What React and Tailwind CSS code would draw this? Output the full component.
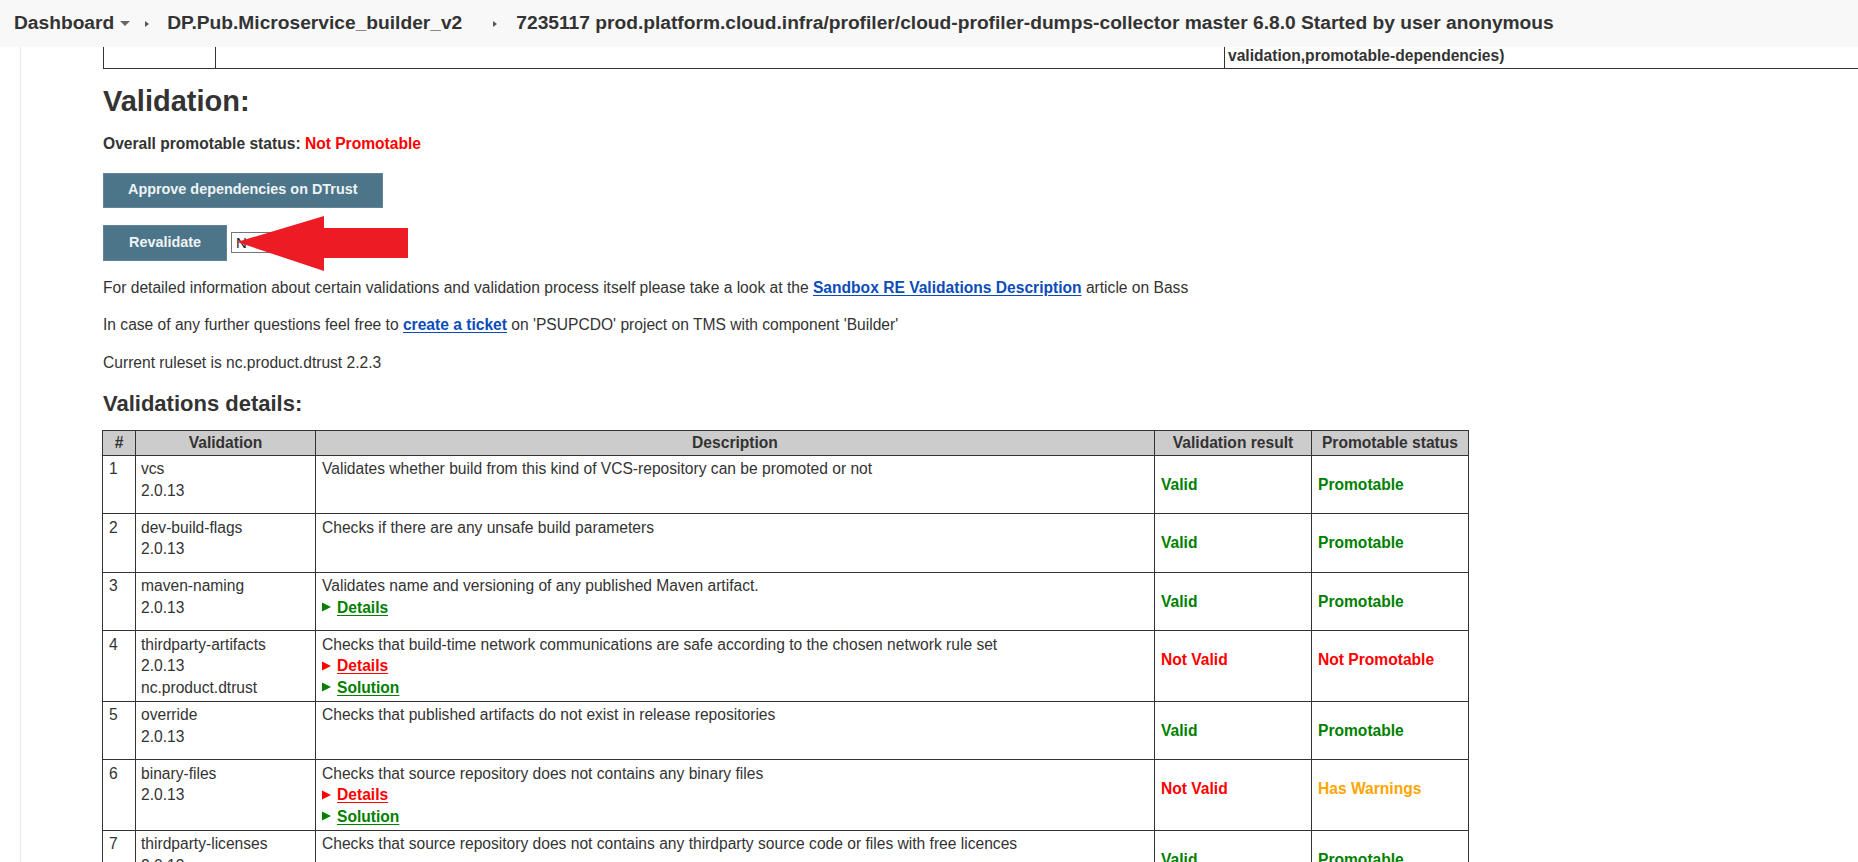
import React from "react";

const rows = [
  {
    n: 1,
    name: ["vcs", "2.0.13"],
    desc: "Validates whether build from this kind of VCS-repository can be promoted or not",
    links: [],
    result: "valid",
    status: "promotable",
  },
  {
    n: 2,
    name: ["dev-build-flags", "2.0.13"],
    desc: "Checks if there are any unsafe build parameters",
    links: [],
    result: "valid",
    status: "promotable",
  },
  {
    n: 3,
    name: ["maven-naming", "2.0.13"],
    desc: "Validates name and versioning of any published Maven artifact.",
    links: [["Details", "green"]],
    result: "valid",
    status: "promotable",
  },
  {
    n: 4,
    name: ["thirdparty-artifacts", "2.0.13", "nc.product.dtrust"],
    desc: "Checks that build-time network communications are safe according to the chosen network rule set",
    links: [
      ["Details", "red"],
      ["Solution", "green"],
    ],
    result: "invalid",
    status: "not",
  },
  {
    n: 5,
    name: ["override", "2.0.13"],
    desc: "Checks that published artifacts do not exist in release repositories",
    links: [],
    result: "valid",
    status: "promotable",
  },
  {
    n: 6,
    name: ["binary-files", "2.0.13"],
    desc: "Checks that source repository does not contains any binary files",
    links: [
      ["Details", "red"],
      ["Solution", "green"],
    ],
    result: "invalid",
    status: "warn",
  },
  {
    n: 7,
    name: ["thirdparty-licenses", "2.0.13"],
    desc: "Checks that source repository does not contains any thirdparty source code or files with free licences",
    links: [],
    result: "valid",
    status: "promotable",
  },
  {
    n: 8,
    name: ["promotable-dependencies", "2.0.13"],
    desc: "Checks that all dependencies of the build are promotable",
    links: [],
    result: "valid",
    status: "promotable",
  },
];

function Disclosure({ label, color }) {
  const red = color === "red";
  return (
    <div className="flex items-center h-[21.5px]">
      <svg width="9" height="10" viewBox="0 0 9 10" className="shrink-0">
        <polygon points="0,0.5 9,5 0,9.5" fill={red ? "#ff0000" : "#008000"} />
      </svg>
      <span
        className={
          "ml-[6px] font-bold underline underline-offset-[2px] " +
          (red ? "text-[#ff0000]" : "text-[#008000]")
        }
      >
        {label}
      </span>
    </div>
  );
}

function Result({ kind }) {
  if (kind === "valid") return <span className="font-bold text-[#008000]">Valid</span>;
  return <span className="font-bold text-[#ff0000]">Not Valid</span>;
}

function Status({ kind }) {
  if (kind === "promotable") return <span className="font-bold text-[#008000]">Promotable</span>;
  if (kind === "warn") return <span className="font-bold text-[#ffa500]">Has Warnings</span>;
  return <span className="font-bold text-[#ff0000]">Not Promotable</span>;
}

function Crumb() {
  return (
    <svg width="6" height="8" viewBox="0 0 6 8" className="shrink-0">
      <polygon points="1,1 5,4 1,7" fill="#555" />
    </svg>
  );
}

export default function App() {
  return (
    <div className="min-h-screen bg-white text-[#333] font-['Liberation_Sans',Arial,sans-serif]">
      <header className="relative z-10 h-[47px] bg-[#f8f8f8] flex items-center pl-[14px] text-[19.2px] font-bold text-[#333] whitespace-nowrap">
        <span>Dashboard</span>
        <svg width="10" height="6" viewBox="0 0 10 6" className="ml-[6px] mt-[1px]">
          <polygon points="0,0 10,0 5,5" fill="#666" />
        </svg>
        <span className="ml-[14px]">
          <Crumb />
        </span>
        <span className="ml-[17px]">DP.Pub.Microservice_builder_v2</span>
        <span className="ml-[30px]">
          <Crumb />
        </span>
        <span className="ml-[18px]">
          7235117 prod.platform.cloud.infra/profiler/cloud-profiler-dumps-collector master 6.8.0 Started by user
          anonymous
        </span>
      </header>

      <div className="flex">
        <div className="w-[21px] shrink-0 border-r border-[#e8e8e8] min-h-[900px]" />
        <main className="flex-1 min-w-0 pl-[82px] text-[15.6px] leading-[21.5px]">
          {/* tail of previous table */}
          <div className="-mt-[4px] flex h-[26px] border-b border-[#333]">
            <div className="w-[112px] border-l border-[#333]" />
            <div className="w-[1009px] border-l border-[#333]" />
            <div className="flex-1 border-l border-[#333] pl-[3px] pt-[2px] font-bold whitespace-nowrap">
              validation,promotable-dependencies)
            </div>
          </div>

          <h1 className="mt-[15px] text-[29px] leading-[35px] font-bold">Validation:</h1>

          <p className="mt-[14px] font-bold">
            Overall promotable status: <span className="text-[#ff0000]">Not Promotable</span>
          </p>

          <button className="mt-[18px] block h-[35px] px-[24px] bg-[#4d7589] border border-[#5f8598] text-[#eef3f5] text-[14.4px] font-bold">
            Approve dependencies on DTrust
          </button>

          <div className="relative mt-[17px] flex items-center">
            <button className="h-[36px] px-[25px] bg-[#4d7589] border border-[#5f8598] text-[#eef3f5] text-[14.4px] font-bold">
              Revalidate
            </button>
            <input
              readOnly
              value="N"
              className="ml-[4px] h-[21px] w-[160px] border border-[#767676] px-[4px] text-[15px] text-[#222] outline-none"
            />
            <svg
              width="171"
              height="55"
              viewBox="0 0 171 55"
              className="absolute left-[134px] top-[-9px] z-10"
            >
              <polygon points="0,26 87,0 87,12 171,12 171,42 87,42 87,55" fill="#ed1c24" />
            </svg>
          </div>

          <p className="mt-[16px]">
            For detailed information about certain validations and validation process itself please take a look at the{" "}
            <a className="font-bold text-[#0b4cba] underline underline-offset-[2px]">Sandbox RE Validations Description</a>{" "}
            article on Bass
          </p>
          <p className="mt-[16px]">
            In case of any further questions feel free to{" "}
            <a className="font-bold text-[#0b4cba] underline underline-offset-[2px]">create a ticket</a> on 'PSUPCDO'
            project on TMS with component 'Builder'
          </p>
          <p className="mt-[16px]">Current ruleset is nc.product.dtrust 2.2.3</p>

          <h2 className="mt-[18px] text-[22px] leading-[26px] font-bold">Validations details:</h2>

          <table className="mt-[13px] -ml-px border-collapse table-fixed w-[1366px]">
            <colgroup>
              <col className="w-[33px]" />
              <col className="w-[180px]" />
              <col className="w-[839px]" />
              <col className="w-[157px]" />
              <col className="w-[157px]" />
            </colgroup>
            <thead>
              <tr className="bg-[#cccccc]">
                <th className="border border-[#333] py-[1px] px-[6px] font-bold text-center">#</th>
                <th className="border border-[#333] py-[1px] px-[6px] font-bold text-center">Validation</th>
                <th className="border border-[#333] py-[1px] px-[6px] font-bold text-center">Description</th>
                <th className="border border-[#333] py-[1px] px-[6px] font-bold text-center">Validation result</th>
                <th className="border border-[#333] py-[1px] px-[6px] font-bold text-center">Promotable status</th>
              </tr>
            </thead>
            <tbody>
              {rows.map((r) => (
                <tr key={r.n}>
                  <td className="border border-[#333] align-top py-[2.5px] px-[6px]">{r.n}</td>
                  <td className="border border-[#333] align-top py-[2.5px] px-[5px]">
                    {r.name.map((l) => (
                      <div key={l}>{l}</div>
                    ))}
                  </td>
                  <td className="border border-[#333] align-top py-[2.5px] px-[6px]">
                    <div>{r.desc}</div>
                    {r.links.map(([label, color]) => (
                      <Disclosure key={label} label={label} color={color} />
                    ))}
                  </td>
                  <td className="border border-[#333] align-top py-[18px] px-[6px]">
                    <Result kind={r.result} />
                  </td>
                  <td className="border border-[#333] align-top py-[18px] px-[6px]">
                    <Status kind={r.status} />
                  </td>
                </tr>
              ))}
            </tbody>
          </table>
          <div className="h-[40px]" />
        </main>
      </div>
    </div>
  );
}
